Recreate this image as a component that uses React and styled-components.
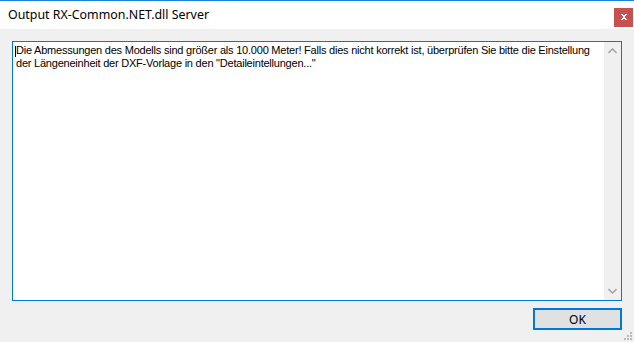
import React from "react";
import styled, { createGlobalStyle } from "styled-components";

const Global = createGlobalStyle`
  html, body { margin: 0; padding: 0; background: #f0f0f0; }
  #root { width: 634px; height: 342px; }
`;

const Window = styled.div`
  width: 634px;
  height: 342px;
  display: flex;
  flex-direction: column;
  position: relative;
  background: #f0f0f0;
  overflow: hidden;
`;

const TitleBar = styled.div`
  height: 30px;
  border-top: 1px solid #1883d7;
  background: #ffffff;
  display: flex;
  align-items: center;
  justify-content: space-between;
  padding: 0 1px 0 8px;
`;

const Title = styled.div`
  font-family: "Noto Sans", "Segoe UI", sans-serif;
  font-size: 12.4px;
  color: #000;
  line-height: 16px;
  margin-top: -1px;
`;

const CloseButton = styled.div`
  width: 19px;
  height: 19px;
  background: #c75050;
  display: flex;
  align-items: center;
  justify-content: center;
  margin-top: 4px;
`;

const Body = styled.div`
  flex: 1;
  display: flex;
  flex-direction: column;
  padding: 12px;
  gap: 7px;
`;

const TextBox = styled.div`
  height: 258px;
  border: 1px solid #0078d7;
  background: #fff;
  display: flex;
`;

const TextArea = styled.div`
  flex: 1;
  min-width: 0;
  overflow: hidden;
  position: relative;
  padding: 2px 0 0 3px;
  font-family: "Liberation Sans", Arial, sans-serif;
  font-size: 11px;
  letter-spacing: -0.22px;
  line-height: 13px;
  color: #000;
  white-space: nowrap;
`;

const Caret = styled.span`
  position: absolute;
  left: 2px;
  top: 4px;
  width: 1px;
  height: 11px;
  background: #000;
`;

const ScrollBar = styled.div`
  width: 17px;
  flex: none;
  background: #f0f0f0;
  display: flex;
  flex-direction: column;
  justify-content: space-between;
  align-items: center;
  padding: 6px 0;
`;

const Footer = styled.div`
  display: flex;
  justify-content: flex-end;
`;

const OkButton = styled.div`
  width: 89px;
  height: 22px;
  box-sizing: border-box;
  border: 2px solid #0078d7;
  background: #e1e1e1;
  display: flex;
  align-items: center;
  justify-content: center;
  font-family: "Noto Sans", "Segoe UI", sans-serif;
  font-size: 12px;
  color: #000;
`;

const Grip = styled.svg`
  position: absolute;
  right: 1px;
  bottom: 1px;
`;

const Chevron = ({ up }) => (
  <svg width="9" height="6" viewBox="0 0 9 6">
    <path
      d={up ? "M0.5 5 L4.5 1 L8.5 5" : "M0.5 1 L4.5 5 L8.5 1"}
      fill="none"
      stroke="#a6a6a6"
      strokeWidth="1.6"
    />
  </svg>
);

export default function App() {
  return (
    <>
      <Global />
      <Window>
        <TitleBar>
          <Title>Output RX-Common.NET.dll Server</Title>
          <CloseButton>
            <svg width="6" height="6" viewBox="0 0 6 6" shapeRendering="crispEdges">
              <path d="M0 0h2v1H0zM4 0h2v1H4zM1 1h4v1H1zM2 2h2v2H2zM1 4h4v1H1zM0 5h2v1H0zM4 5h2v1H4z" fill="#fff" />
            </svg>
          </CloseButton>
        </TitleBar>
        <Body>
          <TextBox>
            <TextArea>
              <Caret />
              Die Abmessungen des Modells sind größer als 10.000 Meter! Falls dies nicht korrekt ist, überprüfen Sie bitte die Einstellung
              <br />
              der Längeneinheit der DXF-Vorlage in den "Detaileintellungen..."
            </TextArea>
            <ScrollBar>
              <Chevron up />
              <Chevron />
            </ScrollBar>
          </TextBox>
          <Footer>
            <OkButton>OK</OkButton>
          </Footer>
        </Body>
        <Grip width="9" height="9" viewBox="0 0 9 9" shapeRendering="crispEdges">
          <g fill="#b8b8b8">
            <rect x="6" y="0" width="2" height="2" />
            <rect x="3" y="3" width="2" height="2" />
            <rect x="6" y="3" width="2" height="2" />
            <rect x="0" y="6" width="2" height="2" />
            <rect x="3" y="6" width="2" height="2" />
            <rect x="6" y="6" width="2" height="2" />
          </g>
        </Grip>
      </Window>
    </>
  );
}
